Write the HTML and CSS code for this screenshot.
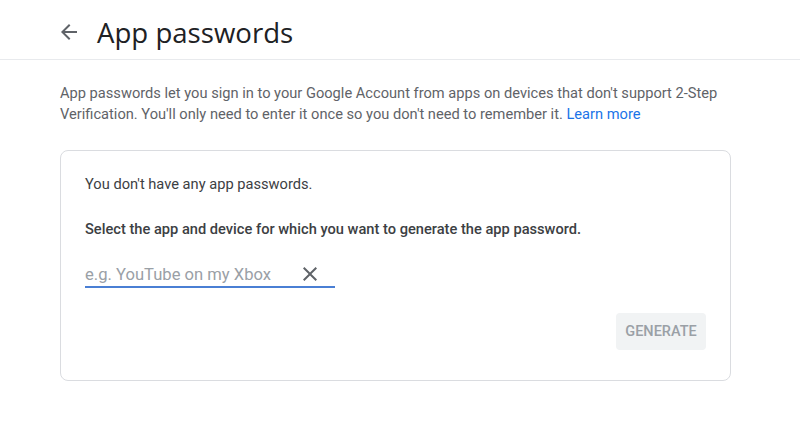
FILE: index.html
```html
<!DOCTYPE html>
<html>
<head>
<meta charset="utf-8">
<link rel="stylesheet" href="styles.css">
</head>
<body>
<header class="top">
  <span class="back">
    <svg width="24" height="24" viewBox="0 0 24 24"><path d="M20 11H7.83l5.59-5.59L12 4l-8 8 8 8 1.41-1.41L7.83 13H20v-2z" fill="#5f6368"/></svg>
  </span>
  <h1 class="title">App passwords</h1>
</header>
<main class="main">
  <p class="desc">App passwords let you sign in to your Google Account from apps on devices that don't support 2-Step Verification. You'll only need to enter it once so you don't need to remember it. <a class="link" href="#">Learn more</a></p>
  <section class="card">
    <p class="none">You don't have any app passwords.</p>
    <p class="select">Select the app and device for which you want to generate the app password.</p>
    <div class="field">
      <span class="placeholder">e.g. YouTube on my Xbox</span>
      <svg class="clear" width="24" height="24" viewBox="0 0 24 24"><path d="M19 6.41L17.59 5 12 10.59 6.41 5 5 6.41 10.59 12 5 17.59 6.41 19 12 13.41 17.59 19 19 17.59 13.41 12z" fill="#5f6368"/></svg>
    </div>
    <div class="actions">
      <button class="gen">GENERATE</button>
    </div>
  </section>
</main>
</body>
</html>
```

FILE: styles.css
```css
* { box-sizing: border-box; }
body {
  margin: 0;
  background: #fff;
  font-family: Roboto, "Noto Sans", Arial, sans-serif;
  color: #3c4043;
}
.top {
  display: flex;
  align-items: center;
  height: 60px;
  border-bottom: 1px solid #e8eaed;
  padding-left: 57px;
}
.back {
  display: flex;
  width: 24px;
  height: 24px;
  margin-top: 4px;
}
.title {
  margin: 4px 0 0 16px;
  font-family: "Open Sans", Roboto, sans-serif;
  font-weight: 400;
  font-size: 27.6px;
  color: #202124;
}
.main {
  padding: 23px 60px 0 60px;
}
.desc {
  margin: 0;
  font-size: 14.65px;
  line-height: 21px;
  color: #5f6368;
  max-width: 680px;
}
.link {
  color: #1a73e8;
  text-decoration: none;
}
.card {
  margin-top: 25px;
  width: 671px;
  height: 231px;
  border: 1px solid #dadce0;
  border-radius: 8px;
  padding: 23px 24px 0 24px;
}
.none {
  margin: 0;
  font-size: 14.65px;
  line-height: 20px;
  color: #3c4043;
}
.select {
  margin: 25px 0 0 0;
  font-size: 14.65px;
  line-height: 20px;
  font-weight: 500;
  color: #3c4043;
}
.field {
  margin-top: 19px;
  width: 250px;
  height: 30px;
  border-bottom: 2px solid #4a7fd4;
  display: flex;
  align-items: center;
  justify-content: space-between;
  padding-top: 4px;
}
.placeholder {
  font-size: 16.6px;
  color: #9aa0a6;
}
.clear {
  margin-right: 13px;
}
.actions {
  display: flex;
  justify-content: flex-end;
  margin-top: 25px;
}
.gen {
  width: 90px;
  height: 37px;
  border: none;
  border-radius: 4px;
  background: #f1f3f4;
  color: #9aa0a6;
  font-family: Roboto, sans-serif;
  font-size: 14.5px;
  font-weight: 500;
  padding: 0;
}
```
